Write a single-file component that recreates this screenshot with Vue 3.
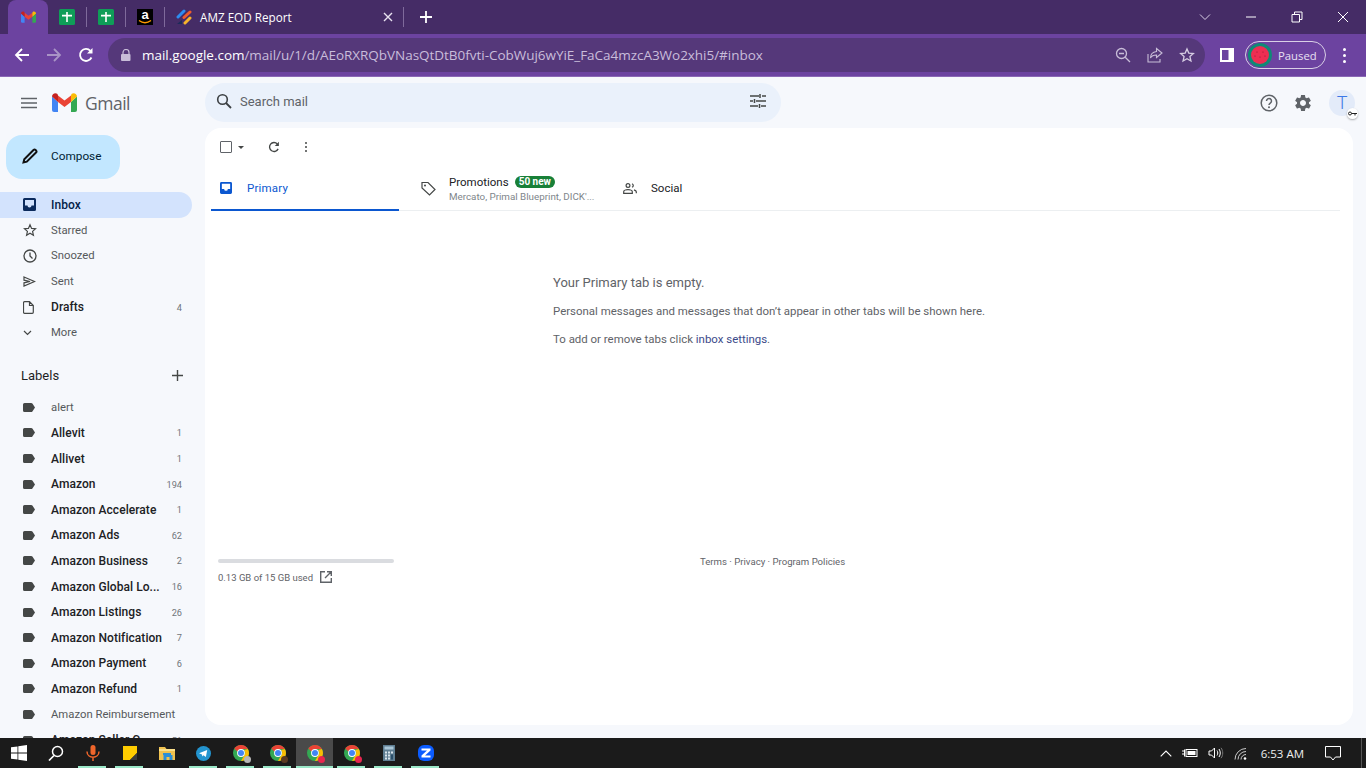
<script setup>
const navItems = [
  { name: 'Inbox', active: true, bold: true, icon: 'inbox' },
  { name: 'Starred', icon: 'star' },
  { name: 'Snoozed', icon: 'clock' },
  { name: 'Sent', icon: 'sent' },
  { name: 'Drafts', bold: true, count: '4', icon: 'draft' },
  { name: 'More', icon: 'more' }
]

const labels = [
  { name: 'alert' },
  { name: 'Allevit', bold: true, count: '1' },
  { name: 'Allivet', bold: true, count: '1' },
  { name: 'Amazon', bold: true, count: '194' },
  { name: 'Amazon Accelerate', bold: true, count: '1' },
  { name: 'Amazon Ads', bold: true, count: '62' },
  { name: 'Amazon Business', bold: true, count: '2' },
  { name: 'Amazon Global Lo...', bold: true, count: '16' },
  { name: 'Amazon Listings', bold: true, count: '26' },
  { name: 'Amazon Notification', bold: true, count: '7' },
  { name: 'Amazon Payment', bold: true, count: '6' },
  { name: 'Amazon Refund', bold: true, count: '1' },
  { name: 'Amazon Reimbursement' },
  { name: 'Amazon Seller C...', bold: true, count: '51' }
]

const taskIcons = [
  { id: 'mic', running: true },
  { id: 'notes', running: true },
  { id: 'folder' },
  { id: 'telegram', running: true },
  { id: 'chrome', badge: '#b8b8b8', running: true },
  { id: 'chrome', badge: '#5a3a22', running: true },
  { id: 'chrome', badge: '#e8264f', active: true, running: true },
  { id: 'chrome', badge: '#e8264f', running: true },
  { id: 'calc', running: true },
  { id: 'zoom', running: true }
]
</script>

<template>
  <div class="screen">
    <div class="tabstrip">
      <div class="tab-active">
        <svg width="15" height="12" viewBox="0 0 25 19">
          <path d="M0 3.500V17a2 2 0 0 0 2 2h4V9z" fill="#4285f4" />
          <path d="M19 9v10h4a2 2 0 0 0 2-2V3.500z" fill="#34a853" />
          <path d="M6 9V2.500l6.500 5 6.500-5V9l-6.500 5z" fill="#ea4335" />
          <path d="M0 3.500C0 .5 3.500-.8 5.500 1L6 2.500V9z" fill="#c5221f" />
          <path d="M19 2.500l.5-1.500C21.500-.8 25 .5 25 3.500L19 9z" fill="#fbbc04" />
        </svg>
      </div>
      <div class="pin first"><svg width="16" height="16" viewBox="0 0 16 16"><rect width="16" height="16" rx="1.500" fill="#0f9d58" /><path d="M7.200 3h1.600v2.800H13v1.600H8.800V13H7.200V7.400H3V5.800h4.200z" fill="#fff" /></svg></div>
      <i class="sep"></i>
      <div class="pin"><svg width="16" height="16" viewBox="0 0 16 16"><rect width="16" height="16" rx="1.500" fill="#0f9d58" /><path d="M7.200 3h1.600v2.800H13v1.600H8.800V13H7.200V7.400H3V5.800h4.200z" fill="#fff" /></svg></div>
      <i class="sep"></i>
      <div class="pin amazon">
        <span>a</span>
        <svg width="14" height="4" viewBox="0 0 14 4"><path d="M1 0.500c4 3 8 3 12 0" fill="none" stroke="#f90" stroke-width="1.300" /></svg>
      </div>
      <i class="sep"></i>
      <div class="tab-page">
        <svg width="16" height="16" viewBox="0 0 16 16">
          <path d="M2 8L8 2" stroke="#2d8cf0" stroke-width="3" stroke-linecap="round" />
          <path d="M8 8.500L14 3" stroke="#ef5b2b" stroke-width="3" stroke-linecap="round" />
          <path d="M9 14l5-5" stroke="#f7b32b" stroke-width="3" stroke-linecap="round" />
          <path d="M1 15l5-4v4z" fill="#1c2b5a" />
        </svg>
        <span class="tab-title">AMZ EOD Report</span>
        <svg class="tab-close" width="10" height="10" viewBox="0 0 10 10"><path d="M1 1l8 8M9 1l-8 8" stroke="#e8e2f0" stroke-width="1.400" /></svg>
      </div>
      <i class="sep"></i>
      <svg class="new-tab" width="12" height="12" viewBox="0 0 12 12"><path d="M6 0v12M0 6h12" stroke="#fff" stroke-width="1.800" /></svg>
      <div class="win-controls">
        <svg width="12" height="12" viewBox="0 0 12 12"><path d="M1 3.500l5 5 5-5" fill="none" stroke="#d9d0e6" /></svg>
        <svg width="12" height="12" viewBox="0 0 12 12"><path d="M1 6h10" stroke="#fff" /></svg>
        <svg width="12" height="12" viewBox="0 0 12 12"><path d="M1 3.500h7.500V11H1zM3.500 3.500V1H11v7.500H8.500" fill="none" stroke="#fff" /></svg>
        <svg width="12" height="12" viewBox="0 0 12 12"><path d="M1 1l10 10M11 1L1 11" stroke="#fff" /></svg>
      </div>
    </div>

    <div class="toolbar">
      <div class="nav-btns">
        <svg width="16" height="16" viewBox="0 0 16 16"><path d="M15 8H2M8 2L2 8l6 6" fill="none" stroke="#fff" stroke-width="1.800" /></svg>
        <svg width="16" height="16" viewBox="0 0 16 16"><path d="M1 8h13M8 2l6 6-6 6" fill="none" stroke="#a994c6" stroke-width="1.800" /></svg>
        <svg width="16" height="16" viewBox="0 0 16 16"><path d="M13.500 10.500A6 6 0 1 1 12.400 3.800" fill="none" stroke="#fff" stroke-width="1.800" /><path d="M14.500 1v5.500H9z" fill="#fff" /></svg>
      </div>
      <div class="omnibox">
        <svg class="lock" width="10" height="12" viewBox="0 0 10 12"><path d="M2 5V3.500a3 3 0 0 1 6 0V5" fill="none" stroke="#c8bdd8" stroke-width="1.200" /><rect y="5" width="9.500" height="7" rx="1" fill="#c8bdd8" /></svg>
        <span class="url"><b>mail.google.com</b>/mail/u/1/d/AEoRXRQbVNasQtDtB0fvti-CobWuj6wYiE_FaCa4mzcA3Wo2xhi5/#inbox</span>
        <div class="omni-actions">
          <svg width="16" height="16" viewBox="0 0 16 16"><circle cx="6.500" cy="6.500" r="5" fill="none" stroke="#c8bdd8" stroke-width="1.300" /><path d="M4 6.500h5M10.200 10.200L15 15" stroke="#c8bdd8" stroke-width="1.300" /></svg>
          <svg width="16" height="16" viewBox="0 0 16 16"><path d="M9.500 1.500L15 6l-5.500 4.500V8C6 8 4.500 9 3.500 11c0-4 2-6 6-6.500zM1 7v8h12v-3" fill="none" stroke="#c8bdd8" stroke-width="1.100" /></svg>
          <svg width="16" height="16" viewBox="0 0 24 24"><path d="M12 3l2.700 6.200 6.800.6-5.100 4.500 1.500 6.700L12 17.500 6.100 21l1.500-6.700-5.100-4.500 6.800-.6z" fill="none" stroke="#d5cce2" stroke-width="2" /></svg>
        </div>
      </div>
      <svg class="side-panel" width="14" height="14" viewBox="0 0 14 14"><path fill-rule="evenodd" d="M0 0h14v14H0zM2 2v10h6.500V2z" fill="#fff" /></svg>
      <div class="paused">
        <svg width="24" height="24" viewBox="0 0 24 24">
          <circle cx="12" cy="12" r="12" fill="#0e8a76" />
          <circle cx="12" cy="12" r="9" fill="#ee2e52" />
          <circle cx="9" cy="9" r=".6" fill="#8a1b34" /><circle cx="15" cy="9" r=".6" fill="#8a1b34" /><circle cx="12" cy="14" r=".6" fill="#8a1b34" /><circle cx="7" cy="13" r=".6" fill="#8a1b34" /><circle cx="17" cy="13" r=".6" fill="#8a1b34" />
        </svg>
        <span>Paused</span>
      </div>
      <div class="chrome-dots"><i></i><i></i><i></i></div>
    </div>

    <div class="gmail">
      <header class="gm-header">
        <div class="brand">
          <svg class="hamburger" width="16" height="12" viewBox="0 0 16 12"><path d="M0 1.500h16M0 6h16M0 10.500h16" stroke="#5f6368" stroke-width="1.400" /></svg>
          <svg class="logo" width="25" height="19" viewBox="0 0 25 19">
            <path d="M0 3.500V17a2 2 0 0 0 2 2h4V9z" fill="#4285f4" />
            <path d="M19 9v10h4a2 2 0 0 0 2-2V3.500z" fill="#34a853" />
            <path d="M6 9V2.500l6.500 5 6.500-5V9l-6.500 5z" fill="#ea4335" />
            <path d="M0 3.500C0 .5 3.500-.8 5.500 1L6 2.500V9z" fill="#c5221f" />
            <path d="M19 2.500l.5-1.500C21.500-.8 25 .5 25 3.500L19 9z" fill="#fbbc04" />
          </svg>
          <span class="wordmark">Gmail</span>
        </div>
        <div class="search">
          <svg width="16" height="16" viewBox="0 0 16 16"><circle cx="6.500" cy="6.500" r="4.800" fill="none" stroke="#3c4043" stroke-width="1.600" /><path d="M10 10l5 5" stroke="#3c4043" stroke-width="1.800" /></svg>
          <span>Search mail</span>
          <svg class="tune" width="16" height="14" viewBox="0 0 16 14"><path d="M0 2h9M12 2h4M0 7h3M6 7h10M0 12h8M11 12h5M10 0v4M4.500 5v4M9.500 10v4" stroke="#444746" stroke-width="1.500" /></svg>
        </div>
        <div class="head-actions">
          <svg width="18" height="18" viewBox="0 0 18 18"><circle cx="9" cy="9" r="7.800" fill="none" stroke="#5f6368" stroke-width="1.500" /><path d="M6.500 7a2.500 2.500 0 1 1 3.800 2.100c-.9.600-1.300 1-1.300 2" fill="none" stroke="#5f6368" stroke-width="1.500" /><circle cx="9" cy="13.200" r="1" fill="#5f6368" /></svg>
          <svg class="gear" width="20" height="20" viewBox="0 0 24 24"><path fill="#5f6368" d="M19.140 12.940c.04-.3.06-.61.06-.94 0-.32-.02-.64-.07-.94l2.030-1.580c.18-.14.23-.41.12-.61l-1.920-3.320c-.12-.22-.37-.29-.59-.22l-2.390.96c-.5-.38-1.030-.7-1.620-.94l-.36-2.540c-.04-.24-.24-.41-.48-.41h-3.840c-.24 0-.43.17-.47.41l-.36 2.540c-.59.24-1.130.57-1.620.94l-2.390-.96c-.22-.08-.47 0-.59.22L2.740 8.870c-.12.21-.08.47.12.61l2.030 1.580c-.05.3-.09.63-.09.94s.02.64.07.94l-2.030 1.580c-.18.14-.23.41-.12.61l1.920 3.320c.12.22.37.29.59.22l2.390-.96c.5.38 1.030.7 1.620.94l.36 2.540c.05.24.24.41.48.41h3.840c.24 0 .44-.17.47-.41l.36-2.540c.59-.24 1.130-.56 1.620-.94l2.390.96c.22.08.47 0 .59-.22l1.920-3.320c.12-.22.07-.47-.12-.61l-2.010-1.580zM12 15.600c-1.980 0-3.600-1.620-3.600-3.600s1.620-3.600 3.600-3.600 3.600 1.620 3.600 3.600-1.620 3.600-3.600 3.600z" /></svg>
          <div class="avatar">
            T
            <span class="key"><svg width="9" height="5" viewBox="0 0 9 5"><circle cx="2" cy="2.500" r="1.500" fill="none" stroke="#222" /><path d="M3.500 2.500H9M7 2.500V4.500" stroke="#222" /></svg></span>
          </div>
        </div>
      </header>

      <div class="gm-body">
        <aside class="sidebar">
          <button class="compose">
            <svg width="16" height="16" viewBox="0 0 16 16"><path d="M1.500 14.500l.8-3.300L11.500 2a1.500 1.500 0 0 1 2.100 0l.4.400a1.500 1.500 0 0 1 0 2.100L4.800 13.700z" fill="none" stroke="#111" stroke-width="2" /></svg>
            Compose
          </button>

          <ul class="nav">
            <li v-for="item in navItems" :key="item.name" class="row" :class="{ active: item.active, bold: item.bold }">
              <span class="row-icon">
                <svg v-if="item.icon === 'inbox'" width="13" height="13" viewBox="0 0 13 13"><path fill-rule="evenodd" d="M1.500 0h10A1.500 1.500 0 0 1 13 1.500v10a1.500 1.500 0 0 1-1.500 1.500h-10A1.500 1.500 0 0 1 0 11.500v-10A1.500 1.500 0 0 1 1.500 0zM2 2v5.500h2.500a2 2 0 0 0 4 0H11V2z" fill="#0b2a5c" /></svg>
                <svg v-else-if="item.icon === 'star'" width="14" height="14" viewBox="0 0 24 24"><path d="M12 3l2.700 6.200 6.800.6-5.100 4.500 1.500 6.700L12 17.500 6.100 21l1.500-6.700-5.100-4.500 6.800-.6z" fill="none" stroke="#444746" stroke-width="2" /></svg>
                <svg v-else-if="item.icon === 'clock'" width="14" height="14" viewBox="0 0 14 14"><circle cx="7" cy="7" r="6" fill="none" stroke="#444746" stroke-width="1.300" /><path d="M7 3.500V7l2.500 2.500" fill="none" stroke="#444746" stroke-width="1.300" /></svg>
                <svg v-else-if="item.icon === 'sent'" width="13" height="11" viewBox="0 0 13 11"><path d="M1 1l10.500 4.500L1 10V6.800l6-1.300-6-1.300z" fill="none" stroke="#444746" stroke-width="1.200" /></svg>
                <svg v-else-if="item.icon === 'draft'" width="11" height="13" viewBox="0 0 11 13"><path d="M1.500.700h5l3.800 3.800v6.800a1 1 0 0 1-1 1h-7.800a1 1 0 0 1-1-1V1.700a1 1 0 0 1 1-1zM6.500.700v3.800h3.800" fill="none" stroke="#444746" stroke-width="1.200" /></svg>
                <svg v-else width="9" height="6" viewBox="0 0 9 6"><path d="M1 1l3.500 3.500L8 1" fill="none" stroke="#444746" stroke-width="1.200" /></svg>
              </span>
              <span class="row-name">{{ item.name }}</span>
              <span class="row-count">{{ item.count }}</span>
            </li>
          </ul>

          <div class="labels-head">
            <span>Labels</span>
            <svg width="11" height="11" viewBox="0 0 11 11"><path d="M5.500 0v11M0 5.500h11" stroke="#444746" stroke-width="1.400" /></svg>
          </div>

          <ul class="nav">
            <li v-for="label in labels" :key="label.name" class="row" :class="{ bold: label.bold }">
              <span class="row-icon">
                <svg width="12" height="9" viewBox="0 0 12 9"><path d="M1.500 0h6.700a1.500 1.500 0 0 1 1.200.6L12 4.500 9.400 8.400a1.500 1.500 0 0 1-1.200.6H1.500A1.500 1.500 0 0 1 0 7.500v-6A1.500 1.500 0 0 1 1.500 0z" fill="#444746" /></svg>
              </span>
              <span class="row-name">{{ label.name }}</span>
              <span class="row-count">{{ label.count }}</span>
            </li>
          </ul>
        </aside>

        <main class="panel">
          <div class="panel-tools">
            <span class="check"></span>
            <span class="caret"></span>
            <svg class="refresh" width="12" height="12" viewBox="0 0 16 16"><path d="M13.500 10.500A6 6 0 1 1 12.400 3.800" fill="none" stroke="#444746" stroke-width="1.800" /><path d="M14.500 1v5.500H9z" fill="#444746" /></svg>
            <div class="kebab"><i></i><i></i><i></i></div>
          </div>

          <div class="tabs">
            <div class="mail-tab primary">
              <svg width="12" height="12" viewBox="0 0 13 13"><path fill-rule="evenodd" d="M1.500 0h10A1.500 1.500 0 0 1 13 1.500v10a1.500 1.500 0 0 1-1.500 1.500h-10A1.500 1.500 0 0 1 0 11.500v-10A1.500 1.500 0 0 1 1.500 0zM2 2v5.500h2.500a2 2 0 0 0 4 0H11V2z" fill="#0b57d0" /></svg>
              <span>Primary</span>
            </div>
            <div class="mail-tab promos">
              <svg width="15" height="15" viewBox="0 0 15 15"><path d="M1 1.500h6l7 7-5.500 5.500-7.500-7z" fill="none" stroke="#444746" stroke-width="1.200" /><circle cx="4" cy="4.500" r="1" fill="#444746" /></svg>
              <div class="promo-text">
                <div class="promo-top"><span>Promotions</span><em>50 new</em></div>
                <div class="promo-sub">Mercato, Primal Blueprint, DICK'...</div>
              </div>
            </div>
            <div class="mail-tab social">
              <svg width="14" height="11" viewBox="0 0 14 11"><circle cx="5" cy="2.500" r="1.900" fill="none" stroke="#444746" stroke-width="1.200" /><path d="M.7 10.300V8.700c0-1.300 2-2 4.300-2s4.300.7 4.300 2v1.600z" fill="none" stroke="#444746" stroke-width="1.200" /><path d="M9 .7a1.900 1.900 0 0 1 0 3.600M11 6.900c1.200.4 2.300 1 2.300 1.900v1.500" fill="none" stroke="#444746" stroke-width="1.200" /></svg>
              <span>Social</span>
            </div>
          </div>

          <section class="empty">
            <h2>Your Primary tab is empty.</h2>
            <p>Personal messages and messages that don’t appear in other tabs will be shown here.</p>
            <p>To add or remove tabs click <a>inbox settings</a>.</p>
          </section>

          <footer class="panel-foot">
            <div class="storage">
              <div class="storage-bar"></div>
              <div class="storage-text">
                <span>0.13 GB of 15 GB used</span>
                <svg width="12" height="12" viewBox="0 0 12 12"><path d="M5 .700H.700v10.600h10.600V7M7 .700h4.300V5M11 1L5 7" fill="none" stroke="#5f6368" stroke-width="1.400" /></svg>
              </div>
            </div>
            <div class="policies">Terms · Privacy · Program Policies</div>
          </footer>
        </main>
      </div>
    </div>

    <div class="taskbar">
      <div class="task-start">
        <svg width="16" height="16" viewBox="0 0 16 16"><path d="M0 2.300l6.500-.9v6.200H0zM7.300 1.300L16 0v7.600H7.300zM0 8.400h6.500v6.200L0 13.700zM7.300 8.400H16V16l-8.700-1.200z" fill="#fff" /></svg>
      </div>
      <div class="task-search">
        <svg width="16" height="16" viewBox="0 0 16 16"><circle cx="9.500" cy="6.500" r="5" fill="none" stroke="#fff" stroke-width="1.500" /><path d="M6 10.500L1 15.500" stroke="#fff" stroke-width="1.700" /></svg>
      </div>
      <div v-for="(app, i) in taskIcons" :key="i" class="task-app" :class="{ current: app.active, running: app.running }">
        <svg v-if="app.id === 'mic'" width="16" height="18" viewBox="0 0 16 18"><rect x="5.500" y="1" width="5" height="10" rx="2.500" fill="#f0662b" /><path d="M2 7.500c0 7.500 12 7.500 12 0M8 13v4" fill="none" stroke="#f0662b" stroke-width="1.500" /></svg>
        <svg v-else-if="app.id === 'notes'" width="14" height="14" viewBox="0 0 14 14"><path d="M0 0h14v7l-7 7H0z" fill="#ffcc00" /><path d="M14 7v7H7z" fill="#3a3a3a" /></svg>
        <svg v-else-if="app.id === 'folder'" width="16" height="14" viewBox="0 0 16 14"><path d="M0 1h6l1.500 2H16v11H0z" fill="#f0c24f" /><path d="M0 3h16v2H0z" fill="#fbe08a" /><path d="M4 7h8v2h1.500v5h-3v-3h-3v3h-3V9H4z" fill="#2b8fd8" /></svg>
        <svg v-else-if="app.id === 'telegram'" width="15" height="15" viewBox="0 0 15 15"><circle cx="7.500" cy="7.500" r="7.500" fill="#2394cf" /><path d="M3 7.300l8.200-3.200-1.300 7-2.400-1.800-1.200 1.200-.3-2-2.900-1.200z" fill="#fff" /></svg>
        <span v-else-if="app.id === 'chrome'" class="chrome-wrap">
          <svg width="16" height="16" viewBox="0 0 16 16">
            <circle cx="8" cy="8" r="8" fill="#34a853" />
            <path d="M8 0a8 8 0 0 1 6.900 4H8a4 4 0 0 0-3.700 2.500L1.300 3.600A8 8 0 0 1 8 0z" fill="#ea4335" />
            <path d="M14.900 4A8 8 0 0 1 8 16l3.400-6A4 4 0 0 0 11 5z" fill="#fbbc04" />
            <circle cx="8" cy="8" r="3.900" fill="#fff" />
            <circle cx="8" cy="8" r="3" fill="#4285f4" />
          </svg>
          <i class="chrome-badge" :style="{ background: app.badge }"></i>
        </span>
        <svg v-else-if="app.id === 'calc'" width="12" height="16" viewBox="0 0 12 16"><rect width="12" height="16" fill="#5e7d91" /><rect x="1.500" y="1.500" width="9" height="3" fill="#a9c6d8" /><path d="M2 6.500h2v2H2zM5 6.500h2v2H5zM8 6.500h2v2H8zM2 9.500h2v2H2zM5 9.500h2v2H5zM2 12.500h2v2H2zM5 12.500h2v2H5z" fill="#dbe6ed" /><path d="M8 9.500h2v5H8z" fill="#2b4f6a" /></svg>
        <svg v-else width="16" height="16" viewBox="0 0 16 16"><rect width="16" height="16" rx="6" fill="#0b5cff" /><path d="M3.500 3.500h9v2L7 10.500h5.500v2h-9v-2L9 5.500H3.500z" fill="#fff" /></svg>
      </div>
      <div class="tray">
        <svg width="12" height="7" viewBox="0 0 12 7"><path d="M.7 6.300L6 1l5.300 5.300" fill="none" stroke="#fff" stroke-width="1.100" /></svg>
        <svg width="16" height="10" viewBox="0 0 16 10"><rect x="4" y="1.500" width="11" height="7" fill="none" stroke="#fff" /><rect x="5.500" y="3" width="8" height="4" fill="#fff" /><path d="M0 3h3M0 6h3M2.500 1.500v7" stroke="#fff" /></svg>
        <svg width="16" height="12" viewBox="0 0 16 12"><path d="M1 4h2.500L6.500 1v10L3.500 8H1z" fill="none" stroke="#fff" /><path d="M9 3.500c1 1.500 1 3.500 0 5M11 2c1.700 2.500 1.700 5.500 0 8" fill="none" stroke="#fff" /><path d="M13 .8c2.300 3 2.300 7.400 0 10.400" fill="none" stroke="#777" /></svg>
        <svg width="16" height="13" viewBox="0 0 16 13"><path d="M1 12.500a11 11 0 0 1 11-11M4 12.500a8 8 0 0 1 8-8M7 12.500a5 5 0 0 1 5-5" fill="none" stroke="#ccc" /><circle cx="11" cy="11.500" r="1.300" fill="#fff" /></svg>
        <span class="clock">6:53 AM</span>
        <svg class="notif" width="16" height="15" viewBox="0 0 16 15"><path d="M.5.500h15V11h-5L8 14l-2.500-3h-5z" fill="none" stroke="#fff" /></svg>
        <i class="tray-edge"></i>
      </div>
    </div>
  </div>
</template>

<style scoped>
.screen {
  width: 1366px;
  height: 768px;
  display: flex;
  flex-direction: column;
  overflow: hidden;
  font-family: Roboto, "Liberation Sans", sans-serif;
  background: #f6f8fc;
}

ul {
  list-style: none;
  margin: 0;
  padding: 0;
}

/* browser tabs */
.tabstrip {
  height: 34px;
  flex: none;
  display: flex;
  align-items: center;
  padding-left: 8px;
  background: #452c66;
}

.tab-active {
  width: 40px;
  height: 34px;
  border-radius: 8px 8px 0 0;
  background: #6c43a0;
  display: flex;
  align-items: center;
  justify-content: center;
  margin-right: 11px;
}

.pin {
  width: 16px;
  height: 16px;
  display: flex;
  margin: 0 11px;
}

.pin.first {
  margin-left: 0;
}

.amazon {
  background: #000;
  color: #fff;
  flex-direction: column;
  align-items: center;
  font: 700 13px/11px "Liberation Sans", sans-serif;
}

.sep {
  width: 1px;
  height: 20px;
  background: #7f6a9b;
  flex: none;
}

.tab-page {
  width: 238px;
  display: flex;
  align-items: center;
  padding: 0 5px 0 11px;
  box-sizing: border-box;
}

.tab-title {
  margin-left: 8px;
  font: 11.700px "Open Sans", sans-serif;
  color: #fff;
  flex: 1;
}

.tab-close {
  margin-right: 5px;
}

.new-tab {
  margin-left: 16px;
}

.win-controls {
  margin-left: auto;
  display: flex;
  gap: 34px;
  padding-right: 17px;
}

/* address bar */
.toolbar {
  height: 43px;
  flex: none;
  display: flex;
  align-items: center;
  background: #6c43a0;
  box-sizing: border-box;
  border-bottom: 1px solid #8a68b5;
}

.nav-btns {
  display: flex;
  gap: 16px;
  padding-left: 14px;
  width: 108px;
  box-sizing: border-box;
}

.omnibox {
  width: 1097px;
  height: 34px;
  border-radius: 17px;
  background: #55387a;
  display: flex;
  align-items: center;
  padding-left: 13px;
  box-sizing: border-box;
}

.lock {
  margin-right: 11px;
  flex: none;
}

.url {
  font: 13.500px "Open Sans", sans-serif;
  letter-spacing: -0.03px;
  color: #c9bdda;
  white-space: nowrap;
}

.url b {
  font-weight: 400;
  color: #fff;
}

.omni-actions {
  margin-left: auto;
  display: flex;
  gap: 16px;
  padding-right: 10px;
}

.side-panel {
  margin-left: 15px;
}

.paused {
  margin-left: 11px;
  width: 81px;
  height: 28px;
  border: 1px solid #d9d0e6;
  border-radius: 14px;
  box-sizing: border-box;
  display: flex;
  align-items: center;
  padding-left: 2px;
  gap: 6px;
  font: 11.300px "Open Sans", sans-serif;
  color: #e8e0f2;
}

.paused svg {
  flex: none;
}

.chrome-dots {
  margin-left: 17px;
  display: flex;
  flex-direction: column;
  gap: 3px;
}

.chrome-dots i {
  width: 3px;
  height: 3px;
  border-radius: 50%;
  background: #fff;
}

/* gmail */
.gmail {
  flex: 1;
  min-height: 0;
  display: flex;
  flex-direction: column;
  background: #f6f8fc;
}

.gm-header {
  height: 51px;
  flex: none;
  display: flex;
  align-items: center;
}

.brand {
  width: 205px;
  display: flex;
  align-items: center;
  padding-left: 21px;
  box-sizing: border-box;
}

.logo {
  margin-left: 15px;
}

.wordmark {
  margin-left: 8px;
  font: 17.500px "Open Sans", sans-serif;
  letter-spacing: -0.5px;
  color: #5f6368;
}

.search {
  width: 576px;
  height: 39px;
  margin-top: -1px;
  border-radius: 20px;
  background: #eaf1fb;
  display: flex;
  align-items: center;
  padding: 0 15px 2px 11px;
  box-sizing: border-box;
  gap: 8px;
  font-size: 13px;
  color: #5f6368;
}

.tune {
  margin-left: auto;
}

.head-actions {
  margin-left: auto;
  display: flex;
  align-items: center;
  gap: 15px;
  padding-right: 11px;
}

.gear {
  margin-right: 1px;
}

.avatar {
  position: relative;
  width: 26px;
  height: 26px;
  border-radius: 50%;
  background: #e3ebf9;
  color: #3b78e7;
  font-size: 18px;
  font-weight: 300;
  line-height: 26px;
  text-align: center;
}

.key {
  position: absolute;
  right: -3px;
  bottom: -3px;
  width: 11px;
  height: 11px;
  border-radius: 50%;
  background: #fff;
  box-shadow: 0 1px 2px rgba(0, 0, 0, 0.3);
  display: flex;
  align-items: center;
  justify-content: center;
}

.gm-body {
  flex: 1;
  min-height: 0;
  display: flex;
}

.sidebar {
  width: 205px;
  flex: none;
  overflow: hidden;
  padding-top: 7px;
  box-sizing: border-box;
}

.compose {
  width: 114px;
  height: 44px;
  margin-left: 6px;
  margin-bottom: 13px;
  border: 0;
  border-radius: 16px;
  background: #c2e7ff;
  color: #001d35;
  display: flex;
  align-items: center;
  gap: 13px;
  padding: 0 0 2px 16px;
  font: 400 11.800px Roboto, sans-serif;
  box-sizing: border-box;
}

.row {
  width: 192px;
  height: 25.600px;
  display: flex;
  align-items: center;
  padding-right: 10px;
  box-sizing: border-box;
  border-radius: 0 13px 13px 0;
  font-size: 11.300px;
  color: #55585b;
}

.row.bold {
  font-size: 12px;
  font-weight: 500;
  letter-spacing: 0.05px;
  color: #202124;
}

.row.active {
  background: #d3e3fd;
  color: #041e49;
}

.row-icon {
  width: 51px;
  padding-left: 23px;
  box-sizing: border-box;
  display: flex;
  justify-content: flex-start;
  flex: none;
}

.row-name {
  flex: 1;
  white-space: nowrap;
}

.row-count {
  font-size: 9.200px;
  font-weight: 400;
  letter-spacing: 0;
  color: #70757a;
}

.labels-head {
  height: 49px;
  width: 192px;
  padding: 11px 9px 0 21px;
  box-sizing: border-box;
  display: flex;
  align-items: center;
  justify-content: space-between;
  font-size: 13px;
  color: #1f1f1f;
}

.panel {
  flex: 1;
  margin: 0 13px 13px 0;
  border-radius: 16px;
  background: #fff;
  display: flex;
  flex-direction: column;
  min-width: 0;
}

.panel-tools {
  height: 38px;
  flex: none;
  display: flex;
  align-items: center;
  padding-left: 15px;
}

.check {
  width: 10px;
  height: 10px;
  border: 1.500px solid #5f6368;
  border-radius: 1px;
}

.caret {
  margin-left: 6px;
  border: 3px solid transparent;
  border-top: 3.500px solid #444746;
  border-bottom: 0;
}

.refresh {
  margin-left: 24px;
}

.kebab {
  margin-left: 25px;
  display: flex;
  flex-direction: column;
  gap: 1.500px;
}

.kebab i {
  width: 2.200px;
  height: 2.200px;
  border-radius: 50%;
  background: #444746;
}

.tabs {
  height: 44px;
  flex: none;
  margin: 0 13px 0 6px;
  display: flex;
  border-bottom: 1px solid #eceff1;
}

.mail-tab {
  display: flex;
  align-items: center;
  font-size: 11.500px;
  color: #202124;
  box-sizing: border-box;
}

.primary {
  width: 188px;
  padding-left: 9px;
  gap: 15px;
  color: #0b57d0;
  letter-spacing: 0.2px;
  border-bottom: 2px solid #0b57d0;
  margin-bottom: -1px;
}

.promos {
  width: 212px;
  padding-left: 22px;
  gap: 13px;
}

.promo-top {
  display: flex;
  align-items: center;
  gap: 6px;
  font-size: 11.500px;
}

.promo-top em {
  font-style: normal;
  font-size: 10px;
  font-weight: 700;
  color: #fff;
  background: #188038;
  border-radius: 7px;
  padding: 0 4px;
  line-height: 12px;
}

.promo-sub {
  font-size: 9.800px;
  color: #80868b;
  margin-top: 2px;
  white-space: nowrap;
}

.social {
  padding-left: 12px;
  gap: 14px;
}

.empty {
  height: 335px;
  flex: none;
  padding: 64px 0 0 348px;
  box-sizing: border-box;
  color: #5f6368;
}

.empty h2 {
  margin: 0 0 13px;
  font-size: 13px;
  line-height: 16px;
  font-weight: 400;
  color: #5f6368;
}

.empty p {
  margin: 0 0 13px;
  font-size: 11.450px;
  line-height: 15px;
}

.empty a {
  color: #3c4a8a;
}

.panel-foot {
  display: flex;
  padding: 13px 0 0 13px;
  font-size: 9.600px;
  color: #5f6368;
}

.storage {
  width: 176px;
}

.storage-bar {
  height: 4px;
  border-radius: 2px;
  background: #dadce0;
}

.storage-text {
  margin-top: 8px;
  display: flex;
  align-items: center;
  gap: 7px;
  font-size: 9.500px;
  white-space: nowrap;
}

.policies {
  margin-left: 306px;
  margin-top: -3px;
}

/* windows taskbar */
.taskbar {
  height: 30px;
  flex: none;
  display: flex;
  align-items: center;
  background: #1b1b1b;
}

.task-start {
  width: 37px;
  height: 30px;
  display: flex;
  align-items: center;
  justify-content: center;
}

.task-search {
  width: 37px;
  height: 30px;
  display: flex;
  align-items: center;
  justify-content: center;
}

.task-app {
  position: relative;
  width: 37px;
  height: 30px;
  display: flex;
  align-items: center;
  justify-content: center;
  box-sizing: border-box;
}

.task-app.running::after {
  content: '';
  position: absolute;
  left: 4px;
  right: 5px;
  bottom: 0;
  height: 2px;
  background: #9be8c8;
}

.task-app.current {
  background: #4a4a4a;
}

.task-app.current::after {
  left: 0;
  right: 0;
}

.chrome-wrap {
  position: relative;
  display: flex;
}

.chrome-badge {
  position: absolute;
  right: -2px;
  bottom: -2px;
  width: 7px;
  height: 7px;
  border-radius: 50%;
}

.tray {
  margin-left: auto;
  display: flex;
  align-items: center;
  gap: 10px;
  padding-right: 4px;
  height: 30px;
  color: #fff;
}

.clock {
  margin-left: 1px;
  font: 11.500px "Open Sans", sans-serif;
  color: #eee;
}

.notif {
  margin-left: 11px;
}

.tray-edge {
  width: 1px;
  height: 30px;
  background: #555;
  margin-left: 10px;
}
</style>
